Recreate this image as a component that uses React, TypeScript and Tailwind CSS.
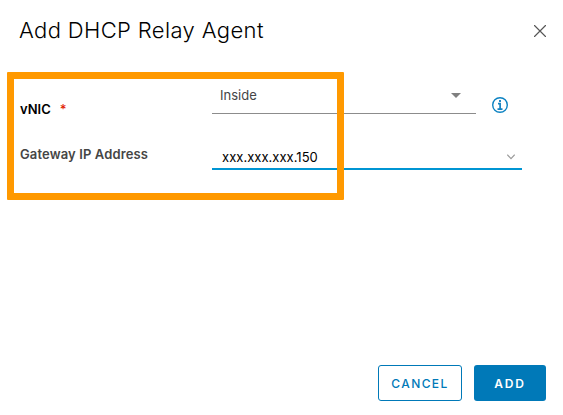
function CloseIcon() {
  return (
    <svg width="12" height="12" viewBox="0 0 12 12" fill="none" stroke="#565656" strokeWidth="1.15" strokeLinecap="round">
      <path d="M0.5 0.5 11.5 11.5M11.5 0.5 0.5 11.5" />
    </svg>
  );
}

function InfoIcon() {
  return (
    <svg width="16" height="16" viewBox="0 0 16 16" fill="none">
      <circle cx="8" cy="8" r="7.3" stroke="#0c82c2" strokeWidth="1.4" />
      <rect x="7" y="3" width="2" height="2" fill="#2088c5" />
      <path d="M6 6.6H8.1V12M5.5 12.2H10.5" stroke="#1481c0" strokeWidth="1.7" />
    </svg>
  );
}

export default function App() {
  return (
    <div className="relative flex h-[415px] w-[563px] flex-col bg-white font-['Inter','Liberation_Sans',sans-serif]">
      <header className="flex h-[72px] items-start justify-between pl-[19px] pr-[17px]">
        <h1 className="mt-[15px] whitespace-nowrap text-[22px] font-light leading-[30px] tracking-[0.37px] text-black">
          Add DHCP Relay Agent
        </h1>
        <button className="mt-[25px]" aria-label="Close">
          <CloseIcon />
        </button>
      </header>

      <main className="flex grow flex-col">
        <div className="flex h-[42px] pl-5">
          <label className="mt-[29px] flex w-48 text-[13px] font-semibold leading-4 text-black">
            vNIC
            <span className="ml-[9px] font-medium text-[#e12200]">*</span>
          </label>
          <div className="flex w-[264px] items-start justify-between border-b border-[#8c8c8c] pl-2 pr-[15px] pt-[15px]">
            <span className="text-[13px] leading-4 text-[#454545]">Inside</span>
            <svg className="mt-[6px]" width="10" height="5" viewBox="0 0 10 5">
              <path d="M0 0H10L5 5Z" fill="#808080" />
            </svg>
          </div>
          <div className="ml-4 mt-[25px]">
            <InfoIcon />
          </div>
        </div>
        <div className="flex h-14 pl-5">
          <label className="mt-8 w-48 whitespace-nowrap text-[13px] font-semibold leading-4 tracking-[0.12px] text-[#454545]">
            Gateway IP Address
          </label>
          <div className="flex w-[310px] items-start justify-between border-b-2 border-[#0095d3] pl-2.5 pr-[7px] pt-[35px]">
            <span className="text-[13px] leading-4 tracking-[0.03px] text-black">xxx.xxx.xxx.150</span>
            <svg className="mt-[5px]" width="8" height="6" viewBox="0 0 8 6" fill="none">
              <path d="M0.3 0.7 4 4.6 7.7 0.7" stroke="#9a9a9a" strokeWidth="1.2" />
            </svg>
          </div>
        </div>
      </main>

      <footer className="flex justify-end gap-3 pb-[14px] pr-[17px]">
        <button className="h-9 w-[84px] rounded-[3px] border border-[#0079b8] pt-px text-[12px] font-medium tracking-[1.4px] text-[#0079b8]">
          CANCEL
        </button>
        <button className="h-9 w-[72px] rounded-[3px] bg-[#0079b8] pt-px text-[12px] font-semibold tracking-[1.8px] text-white">
          ADD
        </button>
      </footer>

      <div className="pointer-events-none absolute left-[7px] top-[72px] h-[128px] w-[337px] rounded-[1px] border-[7px] border-[#ff9900]" />
    </div>
  );
}
